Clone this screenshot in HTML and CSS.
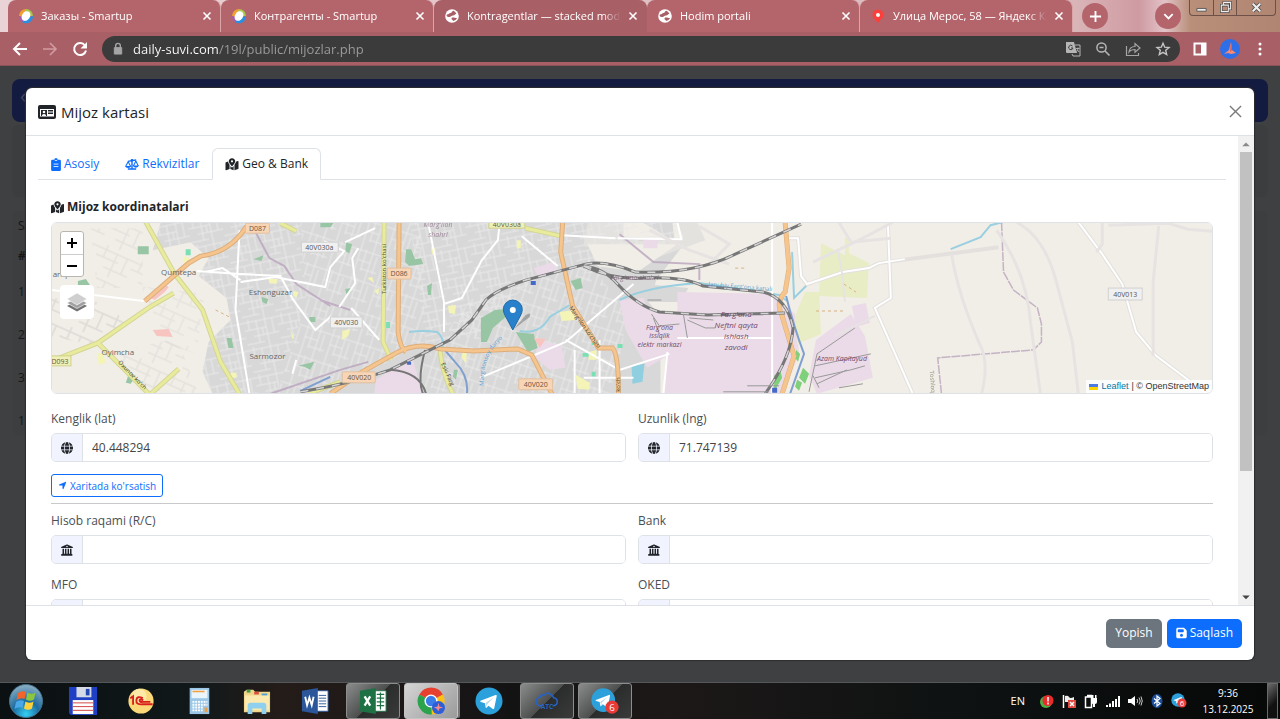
FILE: index.html
```html
<!DOCTYPE html>
<html lang="uz">
<head>
    <meta charset="UTF-8">
    <meta name="viewport" content="width=device-width, initial-scale=1.0">
    <title>Kontragentlar — stacked modal</title>
    <link rel="stylesheet" href="styles.css">
</head>
<body>
    <!-- Icon sprite -->
    <svg class="sprite" aria-hidden="true">
        <symbol id="i-close" viewBox="0 0 10 10"><path d="M1.5 1.5l7 7M8.5 1.5l-7 7" fill="none" stroke="currentColor" stroke-width="1.6"/></symbol>
        <symbol id="i-world" viewBox="0 0 16 16"><circle cx="8" cy="8" r="6.800" fill="#fff"/><path d="M3 6.500c2 0 2-1.500 3.500-1.500S7.500 3 9.500 2.700C11 3.500 12 4.500 12.300 6 11 5.500 11 7.500 9 7.500S7 9.500 4.500 9 3 7.500 2.500 7zM8.500 9.500c2 0 3 .5 4.500 .5-.5 1.500-2 2.700-4 3 0-1.500-1.500-1-1.500-2s.5-1.500 1-1.500z" fill="#a85f66"/></symbol>
        <symbol id="i-smartup" viewBox="0 0 16 16">
            <path d="M8 1a7 7 0 0 0-7 7l4 1 4-6z" fill="#f0a030"/><path d="M8 1a7 7 0 0 1 7 7l-4 0-4-4z" fill="#a7c94a"/>
            <path d="M1 8a7 7 0 0 0 4 6.500l2-5z" fill="#a55bb0"/><path d="M15 8A7 7 0 0 1 4 14l4-4z" fill="#2a8fe0"/>
            <ellipse cx="8" cy="8" rx="4" ry="5.200" transform="rotate(35 8 8)" fill="#fff"/>
        </symbol>
        <symbol id="i-mappin" viewBox="0 0 512 512"><path d="M256 8C176 8 128 68 128 132c0 62 84 156 108 184 10 12 30 12 40 0 24-28 108-122 108-184C384 68 336 8 256 8zm0 82a42 42 0 1 1 0 84 42 42 0 0 1 0-84zM0 196c0-12 8-22 19-27l80-32c4 44 30 88 61 132v163L27 485c-14 5-27-5-27-19zM192 318c8 10 14 18 20 25 23 28 65 28 88 0 6-7 12-15 20-25v160l-128-46zM352 269c31-42 52-82 59-118l73-30c14-5 28 5 28 19v268c0 12-8 22-19 27l-141 50z"/></symbol>
        <symbol id="i-globe" viewBox="0 0 512 512"><path d="M352 256c0 22.200-1.200 43.600-3.300 64H163.300c-2.200-20.400-3.300-41.800-3.300-64s1.200-43.600 3.300-64H348.700c2.200 20.400 3.300 41.800 3.300 64zm28.800-64H503.900c5.300 20.500 8.100 41.900 8.100 64s-2.800 43.500-8.100 64H380.800c2.100-20.600 3.200-42 3.200-64s-1.100-43.400-3.200-64zm112.600-32H376.700c-10-63.900-29.800-117.400-55.300-151.600c78.300 20.700 142 77.500 171.900 151.600zm-149.100 0H167.700c6.100-36.400 15.500-68.600 27-94.700c10.500-23.600 22.200-40.700 33.500-51.500C239.400 3.200 248.700 0 256 0s16.600 3.200 27.800 13.800c11.300 10.800 23 27.900 33.500 51.500c11.600 26 20.900 58.200 27 94.700zm-209 0H18.600C48.600 85.900 112.200 29.100 190.600 8.400C165.100 42.600 145.300 96.100 135.300 160zM8.100 192H131.200c-2.100 20.600-3.200 42-3.200 64s1.100 43.400 3.200 64H8.100C2.800 299.500 0 278.100 0 256s2.800-43.500 8.100-64zM194.700 446.600c-11.600-26-20.900-58.200-27-94.600H344.300c-6.100 36.400-15.500 68.600-27 94.600c-10.500 23.600-22.200 40.700-33.500 51.500C272.600 508.800 263.300 512 256 512s-16.600-3.200-27.800-13.800c-11.300-10.800-23-27.900-33.500-51.500zM135.300 352c10 63.900 29.800 117.400 55.300 151.600C112.200 482.900 48.600 426.100 18.600 352H135.300zm358.100 0c-30 74.100-93.600 130.900-171.900 151.600c25.500-34.200 45.200-87.700 55.300-151.600H493.400z"/></symbol>
        <symbol id="i-bank" viewBox="0 0 512 512"><path d="M244 20q12-6 24 0l220 92q24 12 20 34t-28 22H32q-24 0-28-22t20-34zM256 76a30 30 0 1 0 .1 0zM64 200h64v216h40V200h64v216h48V200h64v216h40V200h64v220l28 22q20 14 16 34t-28 20H28q-24 0-28-20t16-34l48-22z"/></symbol>
        <symbol id="i-telegram" viewBox="0 0 28 28"><circle cx="14" cy="14" r="13.500" fill="#2ca0da"/><path d="M5.500 13.800L20.500 8q1.500-.4 1.200 1.200l-2.500 12q-.4 1.400-1.700.6l-4-3-2 2q-.6.500-.8-.4l-.8-4.200-4-1.200q-1.200-.5-.4-1.200z" fill="#fff"/><path d="M10.500 16l8-5.500-6.300 6.700-.3 2.800z" fill="#b9d8ea"/></symbol>
    </svg>

    <!-- Browser tabs -->
    <header class="tabstrip">
        <div class="tab">
            <svg class="favicon"><use href="#i-smartup"/></svg>
            <span class="tab-title">Заказы - Smartup</span>
            <button class="tab-close" aria-label="Close"><svg><use href="#i-close"/></svg></button>
        </div>
        <div class="tab">
            <svg class="favicon"><use href="#i-smartup"/></svg>
            <span class="tab-title">Контрагенты - Smartup</span>
            <button class="tab-close" aria-label="Close"><svg><use href="#i-close"/></svg></button>
        </div>
        <div class="tab tab-active">
            <svg class="favicon"><use href="#i-world"/></svg>
            <span class="tab-title">Kontragentlar — stacked modal</span>
            <button class="tab-close" aria-label="Close"><svg><use href="#i-close"/></svg></button>
        </div>
        <div class="tab">
            <svg class="favicon"><use href="#i-world"/></svg>
            <span class="tab-title">Hodim portali</span>
            <button class="tab-close" aria-label="Close"><svg><use href="#i-close"/></svg></button>
        </div>
        <div class="tab">
            <svg class="favicon" viewBox="0 0 16 16"><path d="M8 1.500a5.500 5.500 0 0 0-5.500 5.500c0 4 4 4.500 4.800 7.500h1.400c.8-3 4.800-3.500 4.800-7.500A5.500 5.500 0 0 0 8 1.500z" fill="#fc3f3a"/><circle cx="8" cy="7" r="2" fill="#fff"/></svg>
            <span class="tab-title">Улица Мерос, 58 — Яндекс Карты</span>
            <button class="tab-close" aria-label="Close"><svg><use href="#i-close"/></svg></button>
        </div>
        <button class="round-btn round-btn-new" aria-label="New tab"><svg viewBox="0 0 14 14"><path d="M7 1v12M1 7h12" fill="none" stroke="#fff" stroke-width="2"/></svg></button>
        <button class="round-btn round-btn-end" aria-label="Search tabs"><svg viewBox="0 0 14 14"><path d="M2.500 4.500L7 9l4.500-4.500" fill="none" stroke="#fff" stroke-width="2"/></svg></button>
        <div class="window-controls">
            <button aria-label="Minimize"><svg viewBox="0 0 14 14"><path d="M2 8h10v3H2z" fill="#eee" stroke="#555"/></svg></button>
            <button aria-label="Restore"><svg viewBox="0 0 14 14"><path d="M5 1.500h7.500v7H10v3H2.500v-7H5zM5 4.500h5v4" fill="none" stroke="#444" stroke-width="2.600"/><path d="M5 1.500h7.500v7H10v3H2.500v-7H5zM5 4.500h5v4" fill="none" stroke="#eee" stroke-width="1.200"/></svg></button>
            <button class="wide" aria-label="Close window"><svg viewBox="0 0 14 14"><path d="M3 3l8 8M11 3l-8 8" stroke="#444" stroke-width="4"/><path d="M3 3l8 8M11 3l-8 8" stroke="#eee" stroke-width="2.400"/></svg></button>
        </div>
    </header>

    <!-- Address bar -->
    <div class="toolbar">
        <button aria-label="Back"><svg viewBox="0 0 16 16"><path d="M15 8H2M8 2L2 8l6 6" fill="none" stroke="#fff" stroke-width="2"/></svg></button>
        <button aria-label="Forward"><svg viewBox="0 0 16 16"><path d="M1 8h13M8 2l6 6-6 6" fill="none" stroke="#d09ca1" stroke-width="1.600"/></svg></button>
        <button aria-label="Reload"><svg viewBox="0 0 16 16"><path d="M13 4.500A6 6 0 1 0 14 9.500" fill="none" stroke="#fff" stroke-width="2"/><path d="M15 1v6.500H8.500z" fill="#fff"/></svg></button>
        <div class="omnibox">
            <svg class="lock" viewBox="0 0 12 14"><path d="M2 6h8v7H2z" fill="#a5a5a5" stroke="#a5a5a5"/><path d="M3.500 6V4a2.500 2.500 0 0 1 5 0v2" fill="none" stroke="#a5a5a5" stroke-width="1.500"/></svg>
            <input class="url" type="text" aria-label="Address" value="daily-suvi.com/19l/public/mijozlar.php">
            <button aria-label="Translate"><svg viewBox="0 0 16 16"><path d="M1 1h8l3 11H2q-1 0-1-1z" fill="#b5b5b5"/><path d="M10 4h5v11H8l-1-2" fill="none" stroke="#b5b5b5"/><path d="M7.500 5A2.200 2.200 0 1 0 8 7H6" fill="none" stroke="#3c3c3c"/><path d="M11 7.500h3.500M13 6.500v1q-.3 2-1.500 3.200M12.500 9l1.600 2.200" fill="none" stroke="#b5b5b5" stroke-width=".9"/></svg></button>
            <button aria-label="Zoom"><svg viewBox="0 0 16 16"><path d="M10 10l4.500 4.500M4.500 6.500h4" stroke="#b5b5b5" stroke-width="1.600"/><circle cx="6.500" cy="6.500" r="4.600" fill="none" stroke="#b5b5b5" stroke-width="1.500"/></svg></button>
            <button aria-label="Share"><svg viewBox="0 0 16 16"><path d="M1.500 5v9.500h12V12M4 11c.5-4 2.500-5.500 6-5.500v-3L15 7l-5 4.200V8.500C7.500 8.500 5.500 9 4 11z" fill="none" stroke="#a5a5a5" stroke-width="1.200"/></svg></button>
            <button aria-label="Bookmark"><svg viewBox="0 0 16 16"><path d="M8 2.200l1.700 4 4.300.3-3.300 2.800 1 4.300L8 11.300l-3.700 2.300 1-4.300L2 6.500l4.300-.3z" fill="none" stroke="#c5c5c5" stroke-width="1.400"/></svg></button>
        </div>
        <button aria-label="Side panel"><svg viewBox="0 0 16 16"><path d="M2.500 2.500h11v11h-11z" fill="none" stroke="#fff" stroke-width="2"/><path d="M9 2h5v12H9z" fill="#fff"/></svg></button>
        <button class="avatar" aria-label="Profile"><svg viewBox="0 0 20 20"><circle cx="10" cy="10" r="10" fill="#2d6fe8"/><path d="M11 3l1 8 4 3-5 1-3-1-4 1 5-4z" fill="#f98a75"/><path d="M11 3l1 8-2 2z" fill="#d85a50"/></svg></button>
        <button aria-label="Menu"><svg viewBox="0 0 16 16"><g fill="#fff"><circle cx="8" cy="3" r="1.500"/><circle cx="8" cy="8" r="1.500"/><circle cx="8" cy="13" r="1.500"/></g></svg></button>
    </div>

    <!-- Page -->
    <main class="page">
        <div class="page-navbar"><span>‹</span></div>
        <div class="page-card"></div>
        <div class="page-list">
            <p>Sahifa</p>
            <p><b>#</b></p>
            <p>1</p>
            <p>2</p>
            <p>3</p>
            <p>1</p>
        </div>

        <div class="modal" role="dialog" aria-labelledby="modal-title">
            <div class="modal-header">
                <svg class="title-icon" viewBox="0 0 18 14"><path d="M2 0h14q2 0 2 2v10q0 2-2 2H2q-2 0-2-2V2q0-2 2-2z"/><path d="M2 4h14v7.500H2z" fill="#fff"/><path d="M3 5h6v6H3zM10 5h5v1.500h-5zM10 7.500h5V9h-5z"/><circle cx="6" cy="7" r="1.300" fill="#fff"/><path d="M3.800 11q0-2 2.200-2t2.200 2z" fill="#fff"/></svg>
                <h1 class="modal-title" id="modal-title">Mijoz kartasi</h1>
                <button class="modal-close" aria-label="Yopish"><svg viewBox="0 0 14 14"><path d="M1 1l12 12M13 1L1 13" stroke="#7b7b7b" stroke-width="1.500"/></svg></button>
            </div>

            <div class="modal-main">
                <div class="modal-body">
                    <div class="nav-tabs" role="tablist">
                        <button class="nav-tab" role="tab">
                            <svg class="icon" viewBox="0 0 12 16"><path d="M1.500 2H4q0-2 2-2t2 2h2.500Q12 2 12 3.500v11q0 1.500-1.500 1.500h-9Q0 16 0 14.500v-11Q0 2 1.500 2z"/><path d="M3 7.500h6M3 10.500h6M4.500 3h3" stroke="#fff"/></svg>
                            Asosiy
                        </button>
                        <button class="nav-tab" role="tab">
                            <svg class="icon" viewBox="0 0 20 16"><path d="M10 1v13M4 3.500l6-1 6-1M4 14.500h12" fill="none" stroke="currentColor" stroke-width="2"/><circle cx="10" cy="2" r="2"/><path d="M4.500 4L1 10.500M4.500 4L8 10.500M15.500 3L12 10M15.500 3L19 10" fill="none" stroke="currentColor" stroke-width="1.500"/><path d="M0 10h9q-1 3-4.500 3T0 10zM11 9.500h9q-1 3-4.500 3T11 9.500z"/></svg>
                            Rekvizitlar
                        </button>
                        <button class="nav-tab nav-tab-active" role="tab" aria-selected="true">
                            <svg class="icon"><use href="#i-mappin"/></svg>
                            Geo &amp; Bank
                        </button>
                    </div>

                    <div class="tab-pane">
                        <h2 class="section-title"><svg class="icon"><use href="#i-mappin"/></svg> Mijoz koordinatalari</h2>

                        <div class="map">
                            <svg class="map-tiles" viewBox="51 222 1163 172" preserveAspectRatio="xMidYMid slice">
                                <defs>
                                    <pattern id="streets" width="34" height="28" patternUnits="userSpaceOnUse" patternTransform="rotate(-12)">
                                        <path d="M0 3h34M0 11h22M8 18h26M0 25h18M5 0v11M13 3v22M22 0v28M29 3v15M18 11v7" fill="none" stroke="#e9e9e9" stroke-width="1"/>
                                    </pattern>
                                    <pattern id="streets2" width="26" height="30" patternUnits="userSpaceOnUse" patternTransform="rotate(18)">
                                        <path d="M4 0v30M10 4v22M17 0v30M22 8v18M0 6h26M4 16h13M10 24h16" fill="none" stroke="#e9e9e9" stroke-width="1"/>
                                    </pattern>
                                    <pattern id="lanes" width="38" height="30" patternUnits="userSpaceOnUse" patternTransform="rotate(24)">
                                        <path d="M0 5h38M0 13h24M12 22h26M8 0v13M20 5v25M31 5v17" fill="none" stroke="#dddad8" stroke-width="1.500"/>
                                    </pattern>
                                    <path id="p-otash" d="M117 363l34 35"/>
                                    <path id="p-marg" d="M569 308l34 48"/>
                                    <path id="p-canal" d="M484 386q-2-38 31-56l10-5"/>
                                    <path id="p-fargcanal" d="M709 286l88 7"/>
                                </defs>

                                <!-- Ground -->
                                <path d="M0 200h1280v220H0z" fill="#f1eee7"/>
                                <path d="M51 298l55 5 18 18-28 24-45-8z" fill="url(#lanes)"/>
                                <path d="M116 352l60-14 22 56h-62zM90 228h52v60H96z" fill="url(#lanes)" opacity=".6"/>
                                <path d="M140 286l64 8-8 60-30-10z" fill="url(#lanes)" opacity=".5"/>
                                <path d="M160 222h460l-5 14 60 3-2-17h-30l40 24-26 34-8 22 12 14-36 20 4 20 4 38H212l-10-22 6-30 22-22-4-22-28-22 10-18-18-16-38 8z" fill="#d8d8d8"/>
                                <path d="M160 222h140l6 80-30 92h-64l-10-22 6-30 22-22-4-22-28-22 10-18-18-16-38 8z" fill="url(#streets)"/>
                                <path d="M300 222h120l6 120-100 52h-50l30-92z" fill="url(#streets2)"/>
                                <path d="M410 222h200v50l-74 4-60 60-50 8z" fill="url(#streets)"/>
                                <path d="M470 300l120-40 40 60-20 74H400l30-40z" fill="url(#streets2)"/>
                                <path d="M588 222h36v20l60-4-6-16h20l8 18-50 18-36-6-36-6z" fill="#e4e2df"/>
                                <path d="M588 222h90v22h-90z" fill="url(#streets)"/>
                                <path d="M588 244h90l-40 28-40-6z" fill="#f1eee7"/>
                                <path d="M645 284l44 4-8 14h-36zM625 320h36v74h-40z" fill="#d8d8d8"/>

                                <!-- Industrial and farmland -->
                                <g fill="#ebdbe8">
                                    <path d="M678 292l96 2 22 20 4 40-16 40H664l4-68 10-14z"/>
                                    <path d="M620 300l24-2 4 12 30 6-4 36-26 16-14-24-8-14z"/>
                                    <path d="M817 340l35-26 14 22 8 42-56 16-8-18z"/>
                                    <path d="M853 306l14-3 4 20-14 4zM644 238h14v10h-14zM538 340l24 6 4 22-16 2-14-12z"/>
                                    <path d="M376 380l36-24 10 38h-48zM534 268l20-6 4 10-20 4z"/>
                                </g>
                                <path d="M822 243l24 12v-18l4 2v14l20 10-2 35-48-2zM806 292h14l2 42-24 10-2-28z" fill="#e9edc6"/>
                                <g fill="#98c6a4">
                                    <path d="M137 246h11v8h-11zM77 281l8-2 4 6-12 1zM226 338h5l2 10h-5zM253 259l10-4-2 6zM261 297l7 2-2 5-4-2zM128 374l7 2-5 8-5-1zM298 366l16-4-4 8-6-3zM309 317h6v5h-6z"/>
                                    <path d="M406 249l5 0 4 10 6-1 2 6-14 2-4-4zM346 242l6 2-3 9-4-2zM427 286l5-3-1 12h-3zM345 289l6-1-1 5-4 1zM571 281l10-3 2 10-7 2zM320 222h14l-4 5h-10z"/>
                                    <path d="M481 318l14-8 22-2v10l-10-2-14 12-6 14h-6zM516 332l18 2 4 14-10 4zM454 370h4l-2 10-3-3z"/>
                                </g>
                                <g fill="#7fd07a"><path d="M797 350l4 4-2 8-3-4zM804 368l6 6-4 10-6-6zM775 376l6-6 2 8-8 14zM798 380l5 3-3 8-4-4z"/></g>
                                <g fill="#f4f4b6">
                                    <path d="M183 256l6 2-2 6-5-2zM268 279h9l-1 5-7-1zM293 291l5 1-2 6-3-3zM290 330l4 8-2 1zM230 373h6v5h-6zM96 353l6 0 3 10-7 2zM431 246l4 2 1 5-4 1zM367 278l5-1 2 6zM448 306l8-1-1 9-6-1zM517 240h4v8h-4zM342 331l8-2-2 7-6 4zM463 346l4 8-1 10-4-6zM576 375l14 8v7l-12-1zM589 352l8-2v10h-8zM560 312l14-2 2 10-14 1zM374 291l5-3-1 7z"/>
                                </g>
                                <path d="M150 298l12-15 6 4-4 5-10 8zM152 330l16-1 4 8-16-1zM534 338l12 1-6 9z" fill="#f8c4c0"/>
                                <path d="M185 249h5v6h-5zM592 340h6v5h-6zM583 353h6v4h-6zM592 372h4v5h-4zM386 322h4v6h-4zM618 344h5v4h-5z" fill="#7ae0b4"/>
                                <path d="M632 366l13-2-2 18-10 2z" fill="#8fcfe0"/>

                                <!-- Water and boundaries -->
                                <g fill="none" stroke="#99cfe0" stroke-width="2">
                                    <path d="M620 300q30-14 80-17l40 6 40 6 8 6" /><path d="M793 252l2 46 14-14"/>
                                    <path d="M409 332q14-2 28 0 8 6 5 16M520 331q20 4 30-14l20-12"/><path d="M952 249l30-12 10-12 16-4"/>
                                </g>
                                <g fill="none" stroke="#7f9fd0" stroke-width="2">
                                    <path d="M787 296q8 32 18 58l-14 40M443 348l12 14q14 14 12 32M300 391l30-14"/>
                                </g>
                                <g fill="none" stroke="#b9a4bd" stroke-width="2" opacity=".8">
                                    <path d="M253 228l16 30 15 8 12 18 34 22M320 300l30 10M620 234l34 28 46 2v16M270 394l70-24 28-8"/>
                                    <path d="M1003 222l2 50 10 18 24 18 4 16v18l-8 8-96 8 4 38" stroke-width="1.500" stroke-dasharray="9 1"/>
                                </g>

                                <!-- White roads -->
                                <g fill="none" stroke="#fff" stroke-width="2">
                                    <path d="M51 290l92 11M196 271l43 3 42 2M239 230l-4 80 14 84M204 272l18-4 18 12M240 282l35-5 50 10 5-20 14-16-20-10"/>
                                    <path d="M281 278l12 22 22 30 16-14M296 360l-4 14M345 242l30-14M351 308l28 32M358 248l-6 10 3 25-16 24"/>
                                    <path d="M428 222l16 80v30M444 304l18-6 20-38 16-20 2-18M522 236l36 30M562 235l54 3M618 238l64 1-4-17"/>
                                    <path d="M480 378l86-36 68-58M566 340l54 30 50-16M575 350v44M584 378h50M600 340v54M668 352l-4 42M773 222v172M678 338h95"/>
                                </g>
                                <g fill="none" stroke="#e3e0de" stroke-width="4"><path d="M789 238h10l3 38 6 8 36-12 26-4 10-5 120-16M889 222l3 76-16 10 38 86M1080 222l24 32 20 30 14 48 20 24 56 42"/></g>
                                <g fill="none" stroke="#fff" stroke-width="2"><path d="M789 238h10l3 38 6 8 36-12 26-4 10-5 26-4M889 222l3 76-16 10 38 86M1080 222l24 32 20 30 14 48 20 24 56 42"/></g>
                                <g fill="none" stroke="#e6e3e2" stroke-width="3">
                                    <path d="M953 254q6 40 28 90 10 18 2 50M998 230q30 42 34 92l10 72M1018 222q28 14 40 60l16 60 6 52M1104 222v22l-6 8M1161 222l-6 60v74M1110 225l60-2 20 6 24 2M814 262l50-24 30-16M840 222l12 20 40-4M700 226l30 18-20 20M650 230l40 20 40 14"/>
                                    <path d="M846 302l-3-30-4-22M836 336l40-20" stroke-width="2"/>
                                </g>

                                <!-- Yellow roads -->
                                <g fill="none" stroke="#d3d596" stroke-width="5"><path d="M144 220l30 54 28 36 18 52 20 34M51 361l46-18 52-36 24-14M97 343l52 52 29-26M384 222l-1 120 8 18M526 228l36 8M308 394l32-12M440 350q2 24 14 46M280 223l16 8"/></g>
                                <g fill="none" stroke="#e9eb9c" stroke-width="3"><path d="M144 220l30 54 28 36 18 52 20 34M51 361l46-18 52-36 24-14M97 343l52 52 29-26M384 222l-1 120 8 18M526 228l36 8M308 394l32-12M440 350q2 24 14 46M280 223l16 8"/></g>

                                <!-- Orange roads -->
                                <g fill="none" stroke="#dcae7c" stroke-width="5"><path d="M144 301l44-38 12-7q30-4 46-30M399 222l-1 110q2 16 8 20M330 394l32-22 36-20q20-10 42-3l34 2 44-2 14 6 30 58M563 222l-2 30 12 54 26 42h14q6 6 6 46"/><path d="M786 222l4 46-4 24q-10 10-3 24l12 40-12 38"/></g>
                                <g fill="none" stroke="#f6c58e" stroke-width="3"><path d="M144 301l44-38 12-7q30-4 46-30M399 222l-1 110q2 16 8 20M330 394l32-22 36-20q20-10 42-3l34 2 44-2 14 6 30 58M563 222l-2 30 12 54 26 42h14q6 6 6 46"/><path d="M786 222l4 46-4 24q-10 10-3 24l12 40-12 38" stroke-width="4"/></g>

                                <!-- Railways -->
                                <g fill="none" stroke="#777" stroke-width="3">
                                    <path d="M300 392q50-8 90-22l60-30 22-20 14-20q10-10 40-20l60-16q20-4 50 8 60 2 100-18l66-30M584 266q20 2 34 18 20 22 42 28l48 3 78-2M584 266q30 14 60 12 40-2 60 8l60 6q24 6 30 36-2 30-28 66"/>
                                    <path d="M425 350q-8 30-2 44M390 370q30 2 36 24" stroke-width="2"/>
                                </g>
                                <g fill="none" stroke="#d4d4d4" stroke-width="1.500" stroke-dasharray="8 8">
                                    <path d="M300 392q50-8 90-22l60-30 22-20 14-20q10-10 40-20l60-16q20-4 50 8 60 2 100-18l66-30M584 266q20 2 34 18 20 22 42 28l48 3 78-2M584 266q30 14 60 12 40-2 60 8l60 6q24 6 30 36-2 30-28 66"/>
                                </g>
                                <g fill="none" stroke="#999" stroke-width="1"><path d="M648 300h14M652 314l8 12 20-2M654 318l6 16M684 314l4 24M688 320l18 8h10M690 318l24 2M810 392l8-38 38-26M816 366l56-12M816 378l36-8 14-4M818 384l30-14M724 392h46M748 386h32M840 388l24-4M814 376l6 12"/></g>
                                <g fill="#4569c8"><path d="M531 281h5v4h-5zM407 362h4v3h-4zM773 388h5v5h-5z"/></g>
                                <g fill="none" stroke="#d8b080" stroke-dasharray="3 3"><path d="M817 311h30M845 284l12 8M215 310l16 8M736 268h10"/></g>

                                <!-- Labels -->
                                <g class="road-badge"><rect x="245" y="223" width="24" height="10" rx="1"/><text x="257" y="231">D087</text></g>
                                <g class="road-badge"><rect x="387" y="268" width="24" height="11" rx="1"/><text x="399" y="276">D086</text></g>
                                <g class="road-badge"><rect x="342" y="372" width="33" height="11" rx="1"/><text x="359" y="380">40V020</text></g>
                                <g class="road-badge"><rect x="519" y="379" width="34" height="11" rx="1"/><text x="536" y="387">40V020</text></g>
                                <g class="road-badge badge-grey"><rect x="301" y="242" width="37" height="10"/><text x="319" y="250">40V030a</text></g>
                                <g class="road-badge badge-grey"><rect x="330" y="317" width="32" height="11"/><text x="346" y="325">40V030</text></g>
                                <g class="road-badge badge-grey"><rect x="1110" y="288" width="34" height="12"/><text x="1127" y="297">40V013</text></g>
                                <g class="road-badge badge-yellow"><rect x="489" y="219" width="36" height="9"/><text x="507" y="227">40V030a</text></g>
                                <g class="road-badge badge-yellow"><rect x="46" y="356" width="24" height="10"/><text x="59" y="364">D093</text></g>
                                <g class="place">
                                    <text x="178" y="275">Qumtepa</text>
                                    <text x="270" y="295">Eshonguzar</text>
                                    <text x="267" y="359">Sarmozor</text>
                                    <text x="117" y="355">Oyimcha</text>
                                    <text x="59" y="277">ariq</text>
                                </g>
                                <g class="zone">
                                    <text x="737" y="317">Farg'ona</text><text x="737" y="328">Neftni qayta</text><text x="737" y="339">ishlash</text><text x="737" y="350">zavodi</text>
                                </g>
                                <g class="zone zone-small">
                                    <text x="660" y="330">Farg'ona</text><text x="660" y="338">issiqlik</text><text x="660" y="347">elektr markazi</text>
                                    <text x="843" y="361">Azam Kapitayud</text>
                                    <text class="pale" x="438" y="227">Marg'ilon</text><text class="pale" x="438" y="237">shahri</text>
                                    <text class="pale" x="635" y="280">Farg'ona shahri</text>
                                </g>
                                <g class="street">
                                    <text transform="translate(386 294) rotate(-90)">Turkiston ko'chasi</text>
                                    <text transform="translate(441 364) rotate(66)">Eski Farg</text>
                                    <text transform="translate(620 392) rotate(-90)">ko'ch</text>
                                    <text class="pale" transform="translate(931 371) rotate(86)">Toshloq</text>
                                    <text><textPath href="#p-otash">Oxunov ko'ch</textPath></text>
                                    <text><textPath href="#p-marg">Marg'ilon ko'chasi</textPath></text>
                                    <text class="water"><textPath href="#p-canal">Marg'ilonsoy daryo</textPath></text>
                                    <text class="water"><textPath href="#p-fargcanal">Janubiy Farg'ona kanali</textPath></text>
                                </g>

                                <!-- Client marker -->
                                <path d="M514 329l12-14q6-4 4 2z" fill="#000" opacity=".25"/>
                                <path d="M513 330l-7.500-14q-2-3.500-2-6.500a9.500 9.500 0 0 1 19 0q0 3-2 6.500z" fill="#2a81cb" stroke="#1f6aa9"/>
                                <circle cx="513" cy="310" r="3" fill="#fff"/>
                            </svg>
                            <div class="map-controls">
                                <div class="zoom">
                                    <button aria-label="Zoom in"><svg viewBox="0 0 10 10"><path d="M5 0v10M0 5h10" stroke="#000" stroke-width="2"/></svg></button>
                                    <button aria-label="Zoom out"><svg viewBox="0 0 10 10"><path d="M0 5h10" stroke="#000" stroke-width="2"/></svg></button>
                                </div>
                                <button class="layers" aria-label="Layers"><svg viewBox="0 0 22 22"><path d="M11 9.500l10 5.500-10 5.500L1 15z" fill="#747474"/><path d="M11 6.500l10 5.500-10 5.500L1 12z" fill="#a0a0a0" stroke="#fff" stroke-width=".6"/><path d="M11 2l10 6-10 6L1 8z" fill="#cfcfcf" stroke="#fff" stroke-width=".6"/></svg></button>
                            </div>
                            <div class="attribution">
                                <svg viewBox="0 0 12 8"><path d="M0 0h12v4H0z" fill="#4c7be1"/><path d="M0 4h12v4H0z" fill="#ffd500"/></svg>
                                <a href="#">Leaflet</a> | © OpenStreetMap
                            </div>
                        </div>

                        <div class="form-grid">
                            <div class="field">
                                <label for="lat">Kenglik (lat)</label>
                                <div class="input-group">
                                    <span class="addon"><svg class="icon"><use href="#i-globe"/></svg></span>
                                    <input id="lat" type="text" value="40.448294">
                                </div>
                            </div>
                            <div class="field">
                                <label for="lng">Uzunlik (lng)</label>
                                <div class="input-group">
                                    <span class="addon"><svg class="icon"><use href="#i-globe"/></svg></span>
                                    <input id="lng" type="text" value="71.747139">
                                </div>
                            </div>
                        </div>
                        <button class="btn-outline"><svg class="icon-small" viewBox="0 0 448 512"><path d="M429.600 92.100c4.900-11.900 2.100-25.600-7-34.700s-22.800-11.900-34.700-7l-352 144c-14.200 5.800-22.200 20.800-19.300 35.800s16.100 25.800 31.400 25.800H224V432c0 15.300 10.800 28.400 25.800 31.400s30-5.100 35.800-19.300l144-352z"/></svg>Xaritada ko'rsatish</button>
                        <hr class="divider">
                        <div class="form-grid form-grid-bank">
                            <div class="field">
                                <label for="account">Hisob raqami (R/C)</label>
                                <div class="input-group">
                                    <span class="addon"><svg class="icon"><use href="#i-bank"/></svg></span>
                                    <input id="account" type="text">
                                </div>
                            </div>
                            <div class="field">
                                <label for="bank">Bank</label>
                                <div class="input-group">
                                    <span class="addon"><svg class="icon"><use href="#i-bank"/></svg></span>
                                    <input id="bank" type="text">
                                </div>
                            </div>
                            <div class="field">
                                <label for="mfo">MFO</label>
                                <div class="input-group">
                                    <span class="addon"></span>
                                    <input id="mfo" type="text">
                                </div>
                            </div>
                            <div class="field">
                                <label for="oked">OKED</label>
                                <div class="input-group">
                                    <span class="addon"></span>
                                    <input id="oked" type="text">
                                </div>
                            </div>
                        </div>
                    </div>
                </div>
                <div class="scrollbar" aria-hidden="true">
                    <svg viewBox="0 0 15 15"><path d="M4 9.500h7L7.500 6z" fill="#8a8a8a"/></svg>
                    <div class="scroll-track"><div class="scroll-thumb"></div></div>
                    <svg viewBox="0 0 15 15"><path d="M4 6h7L7.500 9.500z" fill="#444"/></svg>
                </div>
            </div>

            <div class="modal-footer">
                <button class="btn btn-secondary">Yopish</button>
                <button class="btn btn-primary"><svg class="icon" viewBox="0 0 448 512"><path d="M64 32C28.700 32 0 60.700 0 96V416c0 35.300 28.700 64 64 64H384c35.300 0 64-28.700 64-64V173.300c0-17-6.700-33.300-18.700-45.300L352 50.700C340 38.700 323.700 32 306.700 32H64zm0 96c0-17.700 14.300-32 32-32H288c17.700 0 32 14.300 32 32v64c0 17.700-14.300 32-32 32H96c-17.700 0-32-14.300-32-32V128zM224 288a64 64 0 1 1 0 128 64 64 0 1 1 0-128z"/></svg>Saqlash</button>
            </div>
        </div>
    </main>

    <!-- Taskbar -->
    <footer class="taskbar">
        <button class="start" aria-label="Start">
            <svg viewBox="0 0 36 34">
                <defs><radialGradient id="orb" cx=".5" cy=".9" r=".9"><stop offset="0" stop-color="#35d0f5"/><stop offset=".45" stop-color="#1c6ca0"/><stop offset="1" stop-color="#8fb0c4"/></radialGradient></defs>
                <circle cx="18" cy="17" r="16.500" fill="url(#orb)" stroke="#45708a"/>
                <path d="M10 9q4-3 8-1l-1.500 7q-4-2-8 1z" fill="#f2652a"/><path d="M19.500 8.500q4 2.500 8 0l-1.500 7q-4 2.500-8 0z" fill="#8cc63f"/>
                <path d="M8 18q4-3 8-1l-1.500 7q-4-2-8 1z" fill="#4aa8e8"/><path d="M17.500 17.500q4 2.500 8 0l-1.500 7q-4 2.500-8 0z" fill="#ffd23c"/>
            </svg>
        </button>
        <button class="task" aria-label="Total Commander"><svg viewBox="0 0 30 30"><path d="M0 0h30v30H2l-2-2z" fill="#1f3fc4"/><path d="M8 0h16v11H8z" fill="#d5dbe6"/><path d="M18 2h4v7h-4z" fill="#2447b8"/><path d="M4 14h22v15H4z" fill="#fff"/><path d="M4 17h22M4 21h22M4 25h22" stroke="#d03a3a"/></svg></button>
        <button class="task" aria-label="1C"><svg viewBox="0 0 30 30"><circle cx="15" cy="15" r="13.500" fill="#fbd978"/><circle cx="13" cy="10" r="8" fill="#fdeaa8"/><path d="M3.500 12l3-2v9M17 12q-6.500-3-7 2t6.500 4.500h11M17.500 14q-4-1.500-4 .5t3.500 1.500h8" fill="none" stroke="#d8201c" stroke-width="2"/></svg></button>
        <button class="task" aria-label="Calculator"><svg viewBox="0 0 30 30"><path d="M5 1h21v28H5z" fill="#9cc7e6"/><path d="M7 3h17v9H7z" fill="#eaf4fb"/><path d="M8 4h13v1.500H8zM21 22h3v5h-3z" fill="#f0a040"/><path d="M8 16h16M8 19h16M8 22h12M8 25h12" stroke="#fff" stroke-width="2" stroke-dasharray="2 1"/></svg></button>
        <button class="task" aria-label="Explorer"><svg viewBox="0 0 30 30"><path d="M1 5l3-2h7l2 2h16v22H1z" fill="#f0d58a"/><path d="M4 3h4v3H4z" fill="#3fa04a"/><path d="M12 5h5v3h-5z" fill="#d85040"/><path d="M20 7h6v3h-6z" fill="#4f9fd8"/><path d="M2 9h26v16H2z" fill="#fbeab0"/><path d="M5 29v-9q0-3 3-3h14q3 0 3 3v9h-5v-6h-10v6z" fill="#8fd0ee"/></svg></button>
        <button class="task" aria-label="Word"><svg viewBox="0 0 30 30"><path d="M16 4h13v22H16z" fill="#fff" stroke="#2b579a"/><path d="M19 9h8M19 12h8M19 15h8M19 18h8M19 21h8" stroke="#2b579a"/><path d="M1 4l17-3v28L1 26z" fill="#2b579a"/><path d="M4.500 10.500l2 9 2.500-8 2.500 8 2-9" fill="none" stroke="#fff" stroke-width="2"/></svg></button>
        <button class="task task-open" aria-label="Excel"><svg viewBox="0 0 30 30"><path d="M16 4h13v22H16z" fill="#fff" stroke="#1e7145"/><path d="M19 8h8M19 12h8M19 16h8M19 20h8M23 6v18" stroke="#1e7145" stroke-width="1.300"/><path d="M1 4l17-3v28L1 26z" fill="#1e7145"/><path d="M6 10l6 10M12 10L6 20" stroke="#fff" stroke-width="2.400"/></svg></button>
        <button class="task task-open task-current" aria-label="Chrome"><svg viewBox="0 0 30 30"><path d="M15 15L2.500 8A14.500 14.500 0 0 1 27.800 8z" fill="#e8402f"/><path d="M15 15l12.800-7a14.500 14.500 0 0 1-12 21.500z" fill="#fbc116"/><path d="M15 15l.8 14.500A14.500 14.500 0 0 1 2.500 8z" fill="#2ba24c"/><circle cx="15" cy="15" r="7" fill="#fff"/><circle cx="15" cy="15" r="5.500" fill="#3b7de8"/><circle cx="23" cy="22" r="7" fill="#2d5fd8"/><path d="M23 17l1 4 4 1-4 1-1 3-2-3-3-1 4-1z" fill="#f98a85"/></svg></button>
        <button class="task" aria-label="Telegram"><svg><use href="#i-telegram"/></svg></button>
        <button class="task task-open" aria-label="ATC"><svg viewBox="0 0 30 30"><path d="M9 20H8a4.500 4.500 0 0 1-.5-9Q8.500 8 12 8.500q3-3.500 7-.5 2.500 1 3 3.500 4 .5 4 4.300T22 20h-1" fill="none" stroke="#2463c8" stroke-width="1.600"/><text x="15" y="24" font-size="7" text-anchor="middle" font-weight="700" fill="#2463c8">ATC</text></svg></button>
        <button class="task task-open" aria-label="Telegram"><svg viewBox="0 0 32 30"><use href="#i-telegram" width="28" height="28"/><circle cx="24" cy="22" r="7.500" fill="#e93a36"/><text x="24" y="26" font-size="11" text-anchor="middle" fill="#fff">6</text></svg></button>

        <div class="tray">
            <span class="lang">EN</span>
            <svg viewBox="0 0 16 16"><circle cx="7" cy="9" r="6" fill="#4fae45"/><circle cx="9" cy="7.500" r="5.500" fill="#e82c2c"/><path d="M9 4v4.500M9 9.500v2" stroke="#fff" stroke-width="1.500"/></svg>
            <svg viewBox="0 0 16 16"><path d="M2.500 2v13" stroke="#fff" stroke-width="1.500"/><path d="M4 3q3-1 4 1t5 0v5H4z" fill="#eee"/><path d="M7 7h8v8H7z" fill="#e04840"/><path d="M9 9l4 4M13 9l-4 4" stroke="#fff" stroke-width="1.500"/></svg>
            <svg viewBox="0 0 16 16"><path d="M4 2.500h5M2.500 4h6v10.500h-6z" fill="none" stroke="#fff" stroke-width="1.500"/><path d="M8 5h6v4q0 2-2 2h-2q-2 0-2-2zM9 2h1.500v4H9zM12 2h1.500v4H12zM10 11h2v3h-2z" fill="#fff"/></svg>
            <svg viewBox="0 0 16 16"><path d="M1 12h2v2H1zM4 10.500h2V14H4zM7 8h2v6H7zM10 6h2v8h-2zM13 3h2v11h-2z" fill="#fff"/></svg>
            <svg viewBox="0 0 16 16"><path d="M1 6h3l4-3v10l-4-3H1z" fill="#fff"/><path d="M10 6q1.500 2 0 4M12 4.500q2.500 3.500 0 7M14 3.500q2.500 4.500 0 9" fill="none" stroke="#ccc"/></svg>
            <svg viewBox="0 0 16 16"><ellipse cx="8" cy="8" rx="5.500" ry="7" fill="#1b4f9c"/><path d="M5 5.500l6 5-3 2.500V3l3 2.500-6 5" fill="none" stroke="#fff" stroke-width="1.200"/></svg>
            <svg viewBox="0 0 16 16"><use href="#i-telegram" width="14" height="14"/><circle cx="11" cy="10" r="4.500" fill="#e93a36"/><text x="11" y="13" font-size="8" text-anchor="middle" fill="#fff">6</text></svg>
        </div>
        <div class="clock"><span>9:36</span><span>13.12.2025</span></div>
        <button class="show-desktop" aria-label="Show desktop"></button>
    </footer>
</body>
</html>
```

FILE: styles.css
```css
:root {
    --chrome: #a85f66;
    --chrome-tab: #b3656b;
    --omnibox: #3b3b3b;
    --primary: #0d6efd;
    --secondary: #6c757d;
    --border: #dee2e6;
    --text: #212529;
    --addon: #f1f4fe;
}

* {
    box-sizing: border-box;
    font-family: 'Segoe UI', 'Open Sans', 'Noto Sans', sans-serif;
}

body {
    margin: 0;
    height: 100vh;
    display: flex;
    flex-direction: column;
    overflow: hidden;
    font-size: 12px;
    line-height: 18px;
    color: var(--text);
}

button {
    border: none;
    background: none;
    padding: 0;
    color: inherit;
    font-size: inherit;
    line-height: inherit;
    cursor: pointer;
}

svg {
    display: block;
    flex: none;
}

.sprite {
    position: absolute;
    width: 0;
    height: 0;
}

.icon {
    width: 13px;
    height: 13px;
    fill: currentColor;
}

/* Browser tabs */
.tabstrip {
    display: flex;
    align-items: center;
    height: 32px;
    flex: none;
    padding-left: 8px;
    background: linear-gradient(90deg, #ead3d6 0, #d9b5b8 84%, #cf9aa2 89%, #e2c3c8 91%, #b98f7a 93%, #b08672 100%);
    color: #fff;
}

.tab {
    display: flex;
    align-items: center;
    flex: 0 1 213px;
    min-width: 0;
    height: 32px;
    padding: 0 8px 0 10px;
    border-radius: 8px 8px 0 0;
    background: var(--chrome-tab);
    border-right: 1px solid #d9a5a9;
}

.tab-active {
    background: var(--chrome);
    border-right-color: var(--chrome);
}

.favicon {
    width: 16px;
    height: 16px;
    margin-right: 7px;
}

.tab-title {
    flex: 1;
    min-width: 0;
    overflow: hidden;
    white-space: nowrap;
    font-size: 11px;
    mask-image: linear-gradient(90deg, #000 88%, transparent);
}

.tab-close {
    margin-left: 7px;
}

.tab-close svg {
    width: 10px;
    height: 10px;
}

.round-btn {
    display: grid;
    place-items: center;
    width: 26px;
    height: 26px;
    border-radius: 50%;
    background: var(--chrome-tab);
}

.round-btn svg {
    width: 13px;
    height: 13px;
}

.round-btn-new {
    margin-left: 9px;
}

.round-btn-end {
    margin-left: auto;
}

.window-controls {
    display: flex;
    align-self: flex-start;
    height: 16px;
    margin: 0 4px 0 8px;
    border: 1px solid #6d5048;
    border-top: none;
    border-radius: 0 0 4px 4px;
}

.window-controls button {
    display: grid;
    place-items: center;
    width: 23px;
}

.window-controls button + button {
    border-left: 1px solid #6d5048;
}

.window-controls .wide {
    width: 39px;
}

.window-controls svg {
    width: 13px;
    height: 13px;
}

/* Address bar */
.toolbar {
    display: flex;
    align-items: center;
    flex: none;
    height: 34px;
    padding: 0 12px;
    gap: 14px;
    background: var(--chrome);
    border-bottom: 1px solid #8a5458;
}

.toolbar button svg {
    width: 16px;
    height: 16px;
}

.omnibox {
    display: flex;
    align-items: center;
    flex: 1;
    gap: 14px;
    height: 26px;
    margin-right: -2px;
    padding: 0 9px 0 10px;
    border-radius: 13px;
    background: var(--omnibox);
}

.lock {
    width: 12px;
    height: 13px;
    margin-right: -5px;
}

.url {
    flex: 1;
    min-width: 0;
    border: none;
    outline: none;
    padding: 0;
    font-size: 13px;
    color: transparent;
    /* host is white, the path after it is grey */
    background: linear-gradient(90deg, #fff 86px, #9d9d9d 86px);
    background-clip: text;
    -webkit-background-clip: text;
}

.toolbar .avatar {
    margin: 0 -2px;
}

.toolbar .avatar svg {
    width: 20px;
    height: 20px;
}

/* Page behind the dialog */
.page {
    position: relative;
    flex: 1;
    min-height: 0;
    padding: 13px 12px;
    background: #3f4042;
    color: #151618;
    overflow: hidden;
}

.page-navbar {
    height: 43px;
    padding: 8px;
    border-radius: 8px;
    background: #141b41;
    color: #44485c;
    font-size: 20px;
}

.page-card {
    height: 72px;
    margin-top: 3px;
    border-radius: 6px;
    background: #3c3d3f;
}

.page-list {
    margin-top: 14px;
    padding: 6px;
    border-radius: 6px;
    background: #3d3e40;
}

.page-list p {
    margin: 0 0 25px;
}

.page-list p:first-child {
    margin-bottom: 12px;
}

.page-list p:nth-child(2) {
    margin-bottom: 18px;
}

.page-list p:last-child {
    margin-bottom: 0;
}

/* Dialog */
.modal {
    position: absolute;
    top: 22px;
    right: 26px;
    bottom: 22px;
    left: 26px;
    display: flex;
    flex-direction: column;
    border-radius: 6px;
    overflow: hidden;
    background: #fff;
    color: var(--text);
    box-shadow: 0 0 1px 1px #2c2d2f;
}

.modal-header {
    display: flex;
    align-items: center;
    flex: none;
    height: 48px;
    padding: 0 12px;
    border-bottom: 1px solid var(--border);
}

.title-icon {
    width: 18px;
    height: 14px;
    margin-right: 5px;
    fill: currentColor;
}

.modal-title {
    margin: 0;
    font-size: 15px;
    font-weight: 400;
}

.modal-close {
    margin-left: auto;
}

.modal-close svg {
    width: 13px;
    height: 13px;
}

.modal-main {
    display: flex;
    flex: 1;
    min-height: 0;
}

.modal-body {
    flex: 1;
    min-width: 0;
    overflow: hidden;
    padding: 12px;
}

.nav-tabs {
    display: flex;
    height: 32px;
    border-bottom: 1px solid var(--border);
}

.nav-tab {
    display: flex;
    align-items: center;
    gap: 3px;
    height: 32px;
    padding: 0 12px;
    border: 1px solid transparent;
    border-radius: 6px 6px 0 0;
    color: var(--primary);
}

.nav-tab .icon {
    width: 14px;
}

.nav-tab:first-child .icon {
    width: 10px;
}

.nav-tab-active {
    border-color: var(--border) var(--border) #fff;
    background: #fff;
    color: #212529;
}

.tab-pane {
    padding: 18px 13px 12px;
}

.section-title {
    display: flex;
    align-items: center;
    gap: 3px;
    margin: 0 0 6px;
    font-size: 12px;
    font-weight: 700;
}

/* Map */
.map {
    position: relative;
    height: 172px;
    border: 1px solid var(--border);
    border-radius: 6px;
    overflow: hidden;
}

.map-tiles {
    width: 100%;
    height: 100%;
}

.map-tiles text {
    font-size: 7px;
    text-anchor: middle;
}

.road-badge rect {
    fill: #f8d5b5;
    stroke: #e0bf9f;
}

.road-badge text {
    fill: #6b5440;
}

.badge-grey rect {
    fill: #f0f0f0;
    stroke: #d0d0d0;
}

.badge-yellow rect {
    fill: #eef0b8;
    stroke: #cfd08a;
}

.badge-grey text {
    fill: #555;
}

.map-tiles .place text {
    font-size: 8px;
    fill: #666;
}

.map-tiles .zone text {
    font-size: 8px;
    font-style: italic;
    fill: #734a6b;
}

.map-tiles .zone-small text {
    font-size: 7px;
}

.map-tiles .street text {
    text-anchor: start;
    font-size: 6px;
    fill: #4b4b35;
}

.map-tiles .street .water {
    fill: #5f9fd0;
}

.map-tiles .pale {
    opacity: 0.6;
}

.map-controls {
    position: absolute;
    top: 8px;
    left: 8px;
    display: flex;
    flex-direction: column;
    align-items: flex-start;
    gap: 8px;
}

.zoom {
    border: 1px solid #b9b6b2;
    border-radius: 3px;
    background: #fff;
    overflow: hidden;
}

.zoom button {
    display: grid;
    place-items: center;
    width: 22px;
    height: 22px;
}

.zoom button + button {
    border-top: 1px solid #ccc;
}

.zoom svg {
    width: 10px;
    height: 10px;
}

.layers {
    display: grid;
    place-items: center;
    width: 34px;
    height: 34px;
    border-radius: 4px;
    background: #fff;
}

.layers svg {
    width: 22px;
    height: 22px;
}

.attribution {
    position: absolute;
    right: 0;
    bottom: 0;
    display: flex;
    align-items: center;
    gap: 3px;
    padding: 0 3px;
    background: rgba(255, 255, 255, 0.8);
    font-family: 'Liberation Sans', Arial, sans-serif;
    font-size: 9px;
    line-height: 13px;
    color: #333;
}

.attribution svg {
    width: 9px;
    height: 6px;
}

.attribution a {
    font-family: inherit;
    color: #0078a8;
    text-decoration: none;
}

/* Form */
.form-grid {
    display: grid;
    grid-template-columns: 1fr 1fr;
    gap: 12px;
    margin-top: 16px;
}

.form-grid-bank {
    margin-top: 8px;
}

.field label {
    display: block;
    margin-bottom: 5px;
    color: #4a4f54;
}

.input-group {
    display: flex;
    height: 29px;
    border: 1px solid var(--border);
    border-radius: 5px;
    overflow: hidden;
}

.addon {
    display: grid;
    place-items: center;
    width: 31px;
    border-right: 1px solid var(--border);
    background: var(--addon);
}

.addon .icon {
    width: 12px;
    height: 12px;
}

.input-group input {
    flex: 1;
    min-width: 0;
    border: none;
    outline: none;
    padding: 0 9px;
    font-size: 12px;
    color: #444;
}

.btn-outline {
    display: flex;
    align-items: center;
    gap: 3px;
    height: 23px;
    margin-top: 12px;
    padding: 0 6px;
    border: 1px solid var(--primary);
    border-radius: 3px;
    color: var(--primary);
    font-size: 10px;
}

.icon-small {
    width: 9px;
    height: 9px;
    fill: currentColor;
}

.divider {
    margin: 6px 0 0;
    border: none;
    border-top: 1px solid #c8c9ca;
}

.scrollbar {
    display: flex;
    flex-direction: column;
    width: 16px;
    background: #f1f1f1;
}

.scrollbar svg {
    width: 16px;
    height: 16px;
}

.scroll-track {
    flex: 1;
    padding: 0 2px;
}

.scroll-thumb {
    height: 73%;
    background: #c1c1c1;
}

.modal-footer {
    display: flex;
    justify-content: flex-end;
    align-items: center;
    flex: none;
    gap: 5px;
    height: 55px;
    padding: 0 12px;
    border-top: 1px solid var(--border);
}

.btn {
    display: flex;
    align-items: center;
    gap: 3px;
    height: 29px;
    padding: 0 9px;
    border-radius: 5px;
    color: #fff;
}

.btn .icon {
    width: 11px;
    height: 12px;
}

.btn-secondary {
    background: var(--secondary);
}

.btn-primary {
    background: var(--primary);
}

/* Taskbar */
.taskbar {
    display: flex;
    align-items: center;
    flex: none;
    gap: 4px;
    height: 37px;
    background: linear-gradient(90deg, #0b1012, #10181a 15%, #241c19 22%, #141314 40%, #1d1818 52%, #0e1212 75%, #070808);
    border-top: 1px solid #55585a;
    color: #fff;
}

.start {
    display: grid;
    place-items: center;
    width: 52px;
}

.start svg {
    width: 36px;
    height: 34px;
}

.task {
    display: grid;
    place-items: center;
    width: 54px;
    height: 36px;
}

.task svg {
    width: 28px;
    height: 28px;
}

.task-open {
    border: 1px solid #8d8d8d;
    border-radius: 3px;
    background: linear-gradient(135deg, #8b8d8c 0, #4d4f4f 50%, #2b2c2c 51%, #3a3a3a 100%);
}

.task-current {
    border-color: #c4c4c4;
    box-shadow: 3px 0 0 -1px #777;
    background: linear-gradient(135deg, #d5d5d5, #9a9a9a);
}

.tray {
    display: flex;
    align-items: center;
    gap: 6px;
    margin-left: auto;
}

.tray svg {
    width: 16px;
    height: 16px;
}

.lang {
    margin-right: 8px;
    font-size: 11px;
}

.clock {
    display: flex;
    flex-direction: column;
    align-items: center;
    width: 66px;
    margin: 0 2px 0 4px;
    font-size: 10px;
    line-height: 16px;
}

.show-desktop {
    width: 11px;
    height: 36px;
    margin-right: 2px;
    border: 1px solid #6a6a6a;
    background: linear-gradient(135deg, #6b6b6b, #111 60%);
}
```
